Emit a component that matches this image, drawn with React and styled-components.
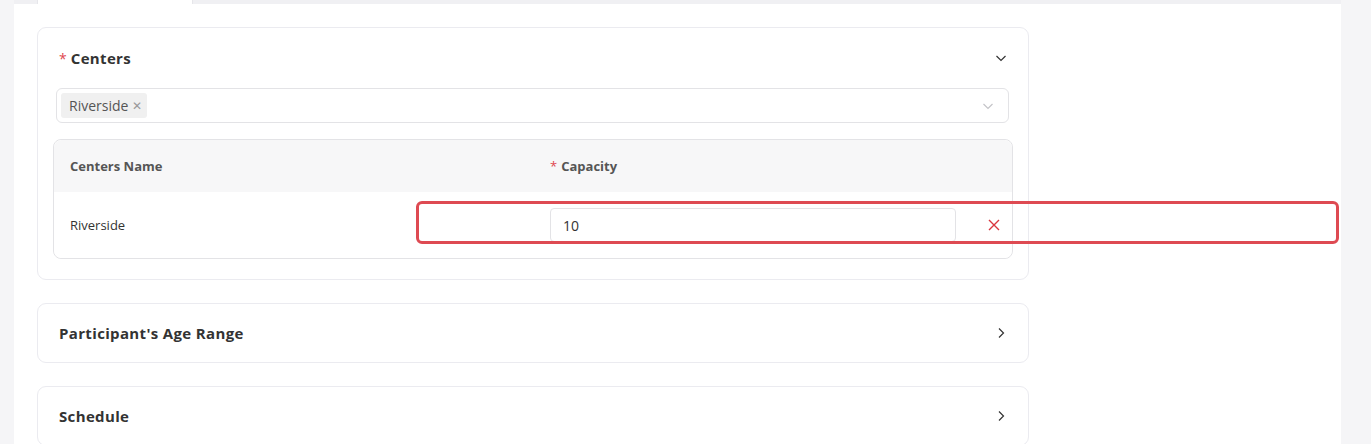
import React from "react";
import styled, { createGlobalStyle } from "styled-components";

const GlobalStyle = createGlobalStyle`
  html, body { margin: 0; padding: 0; background: #f5f5f7; }
  body { font-family: "Open Sans", "Noto Sans", sans-serif; color: #333; }
  * { box-sizing: border-box; }
`;

const Page = styled.div`
  display: flex;
  flex-direction: column;
  padding: 0 30px 0 14px;
  height: 444px;
  overflow: hidden;
`;

const TabStrip = styled.div`
  height: 4px;
  flex-shrink: 0;
  display: flex;
  background: #f0f0f3;
  padding-left: 23px;
`;

const Tab = styled.div`
  width: 156px;
  background: #fff;
  border-left: 1px solid #e6e6ea;
  border-right: 1px solid #e6e6ea;
`;

const Panel = styled.div`
  flex: 1;
  background: #fff;
  padding: 23px 23px;
  display: flex;
  flex-direction: column;
  gap: 23px;
`;

const Card = styled.div`
  width: 992px;
  background: #fff;
  border: 1px solid #ebebf0;
  border-radius: 9px;
  padding: ${(p) => (p.$open ? "19px 15px 20px" : "0 15px")};
  flex-shrink: 0;
`;

const CardHeader = styled.div`
  display: flex;
  align-items: center;
  justify-content: space-between;
  height: ${(p) => (p.$open ? "22px" : "58px")};
  padding: 0 6px;
  margin-bottom: ${(p) => (p.$open ? "19px" : "0")};
`;

const Title = styled.div`
  font-size: 15px;
  font-weight: 700;
  color: #333;
  letter-spacing: 0.35px;
`;

const Req = styled.span`
  color: #e0474f;
  font-weight: 400;
  margin-right: 4px;
  letter-spacing: 0;
  font-size: ${(p) => p.$size || "14px"};
`;

const Select = styled.div`
  height: 35px;
  margin: 0 4px 16px 3px;
  border: 1px solid #e3e3e6;
  border-radius: 6px;
  display: flex;
  align-items: center;
  justify-content: space-between;
  padding: 0 14px 0 4px;
`;

const Tag = styled.span`
  display: inline-flex;
  align-items: center;
  gap: 4px;
  height: 25px;
  padding: 0 5px 0 8px;
  background: #f0f0f0;
  border-radius: 3px;
  font-size: 14px;
  color: #555;
`;

const TagClose = styled.span`
  color: #999;
  font-size: 12px;
  line-height: 1;
`;

const Table = styled.div`
  border: 1px solid #e3e3e6;
  border-radius: 8px;
`;

const Row = styled.div`
  position: relative;
  display: grid;
  grid-template-columns: 480px 438px 1fr;
  align-items: center;
  height: ${(p) => (p.$head ? "52px" : "66px")};
  background: ${(p) => (p.$head ? "#f7f7f8" : "#fff")};
  border-radius: ${(p) => (p.$head ? "8px 8px 0 0" : "0 0 8px 8px")};
`;

const Cell = styled.div`
  padding: 0 16px;
  font-size: 13px;
  font-weight: ${(p) => (p.$head ? 700 : 400)};
  color: ${(p) => (p.$head ? "#555" : "#333")};
  display: flex;
  align-items: center;
  justify-content: ${(p) => (p.$center ? "center" : "flex-start")};
`;

const Input = styled.div`
  width: 100%;
  height: 34px;
  border: 1px solid #e3e3e6;
  border-radius: 4px;
  display: flex;
  align-items: center;
  padding: 0 12px;
  font-size: 14px;
  color: #333;
`;

const Highlight = styled.div`
  position: absolute;
  left: 362px;
  top: 9px;
  width: 923px;
  height: 43px;
  border: 3px solid #de4a52;
  border-radius: 6px;
  pointer-events: none;
`;

const Chevron = ({ dir = "down", color = "#333" }) => (
  <svg width="12" height="12" viewBox="0 0 12 12" fill="none">
    {dir === "down" ? (
      <path d="M1.5 4l4.5 4.5L10.5 4" stroke={color} strokeWidth="1.2" />
    ) : (
      <path d="M4 1.5l4.5 4.5L4 10.5" stroke={color} strokeWidth="1.2" />
    )}
  </svg>
);

const CloseX = () => (
  <svg width="12" height="12" viewBox="0 0 12 12" fill="none">
    <path d="M1 1l10 10M11 1L1 11" stroke="#d9363e" strokeWidth="1.4" />
  </svg>
);

export default function App() {
  return (
    <>
      <GlobalStyle />
      <Page>
        <TabStrip>
          <Tab />
        </TabStrip>
        <Panel>
          <Card $open>
            <CardHeader $open>
              <Title>
                <Req>*</Req>Centers
              </Title>
              <Chevron dir="down" />
            </CardHeader>
            <Select>
              <Tag>
                Riverside<TagClose>✕</TagClose>
              </Tag>
              <Chevron dir="down" color="#c4c4c8" />
            </Select>
            <Table>
              <Row $head>
                <Cell $head>Centers Name</Cell>
                <Cell $head>
                  <Req $size="13px">*</Req>Capacity
                </Cell>
                <Cell $head />
              </Row>
              <Row>
                <Cell>Riverside</Cell>
                <Cell>
                  <Input>10</Input>
                </Cell>
                <Cell $center>
                  <CloseX />
                </Cell>
                <Highlight />
              </Row>
            </Table>
          </Card>
          <Card>
            <CardHeader>
              <Title>Participant's Age Range</Title>
              <Chevron dir="right" />
            </CardHeader>
          </Card>
          <Card>
            <CardHeader>
              <Title>Schedule</Title>
              <Chevron dir="right" />
            </CardHeader>
          </Card>
        </Panel>
      </Page>
    </>
  );
}
